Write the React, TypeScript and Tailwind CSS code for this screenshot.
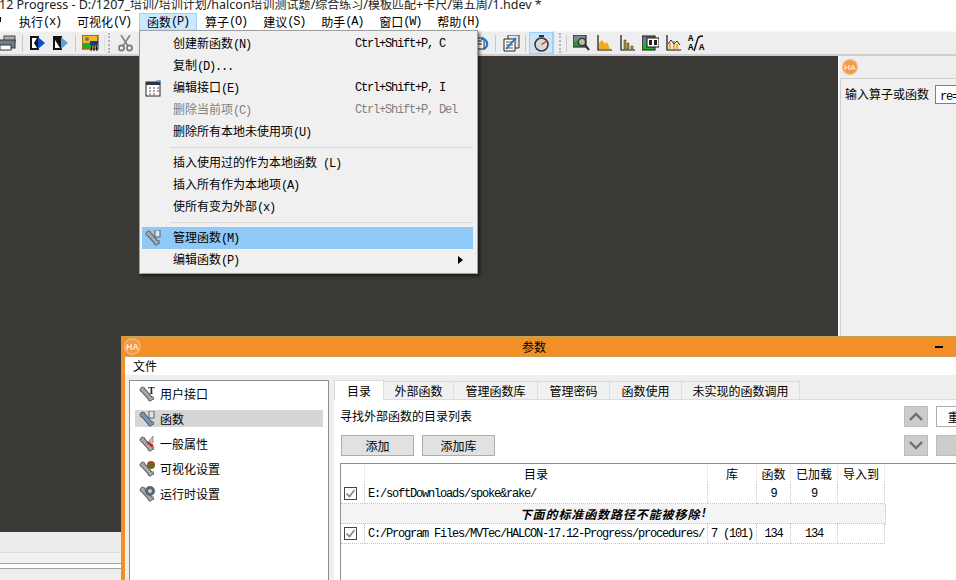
import React from 'react';

// SimSun is not available: CJK runs use Noto, ASCII runs are squeezed to SimSun's 6px cell
const Sim = ({ text }: { text: string }) => (
  <>
    {text.split(/([\x00-\x7f]+)/).filter(Boolean).map((part, i) =>
      /^[\x00-\x7f]+$/.test(part) ? (
        <span key={i} className="font-['Liberation_Mono',monospace] tracking-[-1.2px] whitespace-pre">{part}</span>
      ) : (
        <span key={i}>{part}</span>
      )
    )}
  </>
);

// window title: latin is a bit larger than the CJK here
const TitleText = ({ text }: { text: string }) => (
  <>
    {text.split(/([\x00-\x7f]+)/).filter(Boolean).map((part, i) =>
      /^[\x00-\x7f]+$/.test(part) ? (
        <span key={i} className="font-['Noto_Sans',sans-serif] text-[12.5px] whitespace-pre">{part}</span>
      ) : (
        <span key={i} className="text-[12px]">{part}</span>
      )
    )}
  </>
);

const Wrench = ({ color = '#a3abb1', children }: { color?: string; children?: React.ReactNode }) => (
  <svg width="16" height="16" viewBox="0 0 16 16" className="shrink-0">
    <path d="M3.5 3.5 L11.5 12.5" stroke="#50585e" strokeWidth="5" strokeLinecap="round" />
    <path d="M1 5 L3.5 3.5 L4.5 1 M10 15 L11.5 12.5 L15 12" stroke="#50585e" strokeWidth="3" fill="none" />
    <path d="M3.5 3.5 L11.5 12.5" stroke={color} strokeWidth="3.2" strokeLinecap="round" />
    <path d="M1.5 5 L3.5 3.5 L4.5 1.5 M10.5 14.5 L11.5 12.5 L14.5 12" stroke={color} strokeWidth="1.6" fill="none" />
    {children}
  </svg>
);

const HaLogo = ({ size }: { size: number }) => (
  <svg width={size} height={size} viewBox="0 0 16 16" className="shrink-0">
    <circle cx="8" cy="8" r="8" fill="#f7b478" />
    <circle cx="8" cy="8" r="6.6" fill="#f29a46" />
    <text x="8" y="11" textAnchor="middle" fontSize="8" fontWeight="700" fill="#ffe9d4" fontFamily="Liberation Sans, sans-serif">HA</text>
  </svg>
);

const Tool = ({ children }: { children: React.ReactNode }) => (
  <svg width="17" height="17" viewBox="0 0 17 17" className="shrink-0">{children}</svg>
);

const Sep = ({ className = '' }: { className?: string }) => <div className={`w-px h-[17px] bg-[#c8c8c8] shrink-0 ${className}`} />;
const Grip = () => <div className="w-[3px] h-[20px] shrink-0 border-l-2 border-dotted border-[#b4b4b4]" />;

const Printer = () => (
  <Tool>
    <rect x="4" y="1" width="11" height="6" fill="#a8b0b5" stroke="#444" />
    <rect x="-3" y="5" width="18" height="8" fill="#707e88" stroke="#333" />
    <rect x="0" y="10" width="11" height="5" fill="#fff" stroke="#333" />
  </Tool>
);
const DocArrow = ({ flip }: { flip?: boolean }) => (
  <Tool>
    <path d="M1 1 H10 V15 H1 Z" fill="#111" />
    <path d={flip ? 'M3 5 L8 13 H3 Z' : 'M3 3 H8 L5 8 L8 13 H3 Z'} fill="#fff" />
    <path d="M9 2 L16 8 L9 14 Z" fill={flip ? '#5aa0e0' : '#0b4fd0'} />
  </Tool>
);
const PictureIcon = () => (
  <Tool>
    <rect x="0" y="0" width="16" height="14" fill="#f4b818" stroke="#333" />
    <rect x="1" y="8" width="9" height="5" fill="#19b51f" />
    <circle cx="5" cy="4" r="2" fill="#6b7078" />
    <rect x="8" y="6" width="8" height="4" fill="#123a9a" />
    <path d="M10 10 L9 16 M14 10 L15 16 M12 10 V16" stroke="#111" strokeWidth="1.2" />
  </Tool>
);
const Scissors = () => (
  <Tool>
    <path d="M4 0 L11 11 M13 0 L6 11" stroke="#8a8a8a" strokeWidth="1.8" />
    <circle cx="4.5" cy="13" r="2.6" fill="none" stroke="#777" strokeWidth="1.6" />
    <circle cx="12.5" cy="13" r="2.6" fill="none" stroke="#777" strokeWidth="1.6" />
  </Tool>
);
const UndoDoc = () => (
  <Tool>
    <path d="M-2 3 H8 V14 H-2 Z" fill="#fff" stroke="#222" />
    <path d="M0 6 H6 M0 9 H6" stroke="#222" />
    <path d="M5 4 A5 5 0 1 1 7 14" fill="none" stroke="#1679d6" strokeWidth="2.4" />
  </Tool>
);
const EditDoc = () => (
  <Tool>
    <path d="M5 0 H16 V13 H5 Z" fill="#e4e4e4" stroke="#333" />
    <path d="M1 4 H12 V16 H1 Z" fill="#fff" stroke="#222" />
    <path d="M3 7 H10 M3 10 H10 M3 13 H10" stroke="#555" />
    <path d="M3 14 L13 3" stroke="#1c6fd0" strokeWidth="1.8" />
  </Tool>
);
const Timer = () => (
  <Tool>
    <rect x="6" y="0" width="5" height="2" fill="#333" />
    <circle cx="8.5" cy="9.5" r="6.5" fill="#d8d8d8" stroke="#333" strokeWidth="1.5" />
    <path d="M8.5 9.5 L14 6" stroke="#e03020" strokeWidth="1.3" />
  </Tool>
);
const ZoomImage = () => (
  <Tool>
    <rect x="0" y="0" width="13" height="12" fill="#7b8a92" stroke="#111" />
    <path d="M1 11 V7 L5 5 L12 11 Z" fill="#16a31c" />
    <circle cx="9" cy="7" r="3.6" fill="#b8c4a0" stroke="#333" strokeWidth="1.4" />
    <path d="M12 10 L16 15" stroke="#333" strokeWidth="2.2" />
  </Tool>
);
const AreaChart = () => (
  <Tool>
    <path d="M2 0 V15 H16" fill="none" stroke="#111" strokeWidth="1.2" />
    <path d="M3 14 V8 L6 5 L9 9 L11 7 L14 14 Z" fill="#f3ad12" />
  </Tool>
);
const BarChart = () => (
  <Tool>
    <path d="M2 0 V15 H16" fill="none" stroke="#111" strokeWidth="1.2" />
    <path d="M5 14 V5 H7 V14 Z M8 14 V8 H10 V14 Z M12 14 V11 H14 V14 Z" fill="#c98d10" stroke="#333" strokeWidth="0.5" />
  </Tool>
);
const Feature = () => (
  <Tool>
    <rect x="0" y="1" width="13" height="14" fill="#6d7c84" stroke="#111" />
    <path d="M1 14 V8 L12 14 Z M1 9 H12 V14 H1 Z" fill="#16b51c" />
    <rect x="5" y="3" width="12" height="9" fill="#fff" stroke="#111" />
    <path d="M7 5 H10 V10 H7 Z M12 5 H15 V10 H12 Z" fill="#222" />
  </Tool>
);
const LineChart = () => (
  <Tool>
    <path d="M2 0 V15 H16" fill="none" stroke="#111" strokeWidth="1.2" />
    <path d="M5 14 V8 M9 14 V6 M12 14 V9" stroke="#e89b12" strokeWidth="1.6" />
    <path d="M3 9 L6 5 L9 9 L12 6 L15 10" fill="none" stroke="#333" />
  </Tool>
);
const FontChart = () => (
  <div className="w-[17px] h-[17px] shrink-0 relative font-['Liberation_Mono',monospace] text-[9px] leading-[8px] font-bold text-black">
    <span className="absolute left-0 top-0">A</span>
    <span className="absolute left-0 top-[9px]">A</span>
    <span className="absolute left-[11px] top-[9px]">A</span>
    <svg width="17" height="17" viewBox="0 0 17 17" className="absolute inset-0">
      <path d="M6 16 L10 3 Q11 1 15 1" fill="none" stroke="#111" strokeWidth="1.4" />
    </svg>
  </div>
);

const menuBar = [
  { label: '执行(x)' },
  { label: '可视化(V)' },
  { label: '函数(P)', active: true },
  { label: '算子(O)' },
  { label: '建议(S)' },
  { label: '助手(A)' },
  { label: '窗口(W)' },
  { label: '帮助(H)' },
];

const MenuItem = ({ label, shortcut, disabled, active, icon, arrow }: { label: string; shortcut?: string; disabled?: boolean; active?: boolean; icon?: React.ReactNode; arrow?: boolean }) => (
  <div className={`h-[22px] ml-[2px] mr-[4px] flex items-center relative ${active ? 'bg-[#90c8f6]' : ''} ${disabled ? 'text-[#808080]' : 'text-black'}`}>
    <div className="w-[31px] pl-[3px] flex items-center shrink-0">{icon}</div>
    <div className="w-[182px] shrink-0"><Sim text={label} /></div>
    {shortcut && <Sim text={shortcut} />}
    {arrow && <div className="absolute right-[10px] w-0 h-0 border-y-[4px] border-y-transparent border-l-[5px] border-l-black" />}
  </div>
);

const MenuSep = () => <div className="h-px bg-[#d7d7d7] ml-[30px] mr-[4px] my-[4px]" />;

const tree = [
  { label: '用户接口', icon: <text x="9" y="8" fontSize="10" fontWeight="700" fontFamily="Liberation Serif, serif" fill="#222">T</text> },
  { label: '函数', icon: <rect x="10" y="0" width="5" height="7" fill="#dfe6ea" stroke="#56636c" />, color: '#6b9cc4', selected: true },
  { label: '一般属性', icon: <><path d="M10 5 L14 0 V7 Z" fill="#c4c8cc" stroke="#666" strokeWidth="0.6" /><path d="M8 6 L14 10" stroke="#e01818" strokeWidth="2.2" /></> },
  { label: '可视化设置', icon: <><circle cx="12" cy="4" r="4" fill="#a64a1c" /><circle cx="13" cy="5" r="2" fill="#1f8a2c" /></> },
  { label: '运行时设置', icon: <><circle cx="11" cy="5" r="5" fill="#5a6670" /><circle cx="11" cy="5" r="2" fill="#c8d0d6" /></> },
];

const tabs = [
  { label: '目录', width: 'w-[50px]', active: true },
  { label: '外部函数', width: 'w-[70px]' },
  { label: '管理函数库', width: 'w-[84px]' },
  { label: '管理密码', width: 'w-[72px]' },
  { label: '函数使用', width: 'w-[72px]' },
  { label: '未实现的函数调用', width: 'w-[118px]' },
];

const Check = () => (
  <div className="w-[13px] h-[13px] border border-[#444] bg-white flex items-center justify-center">
    <svg width="11" height="11" viewBox="0 0 11 11"><path d="M1.5 5.5 L4.5 8.5 L9.5 2" fill="none" stroke="#808080" strokeWidth="1.5" /></svg>
  </div>
);

const cols = ['w-[24px]', 'w-[343px]', 'w-[49px]', 'w-[34px]', 'w-[47px]', 'w-[47px]'];
const dotted = 'border-r border-b border-dotted border-[#c4c4c4]';

const Row = ({ dir, lib, fn, loaded }: { dir: string; lib?: string; fn: string; loaded: string }) => (
  <div className="flex h-[20px] items-center">
    <div className={`${cols[0]} h-full flex items-center pl-[3px] ${dotted}`}><Check /></div>
    <div className={`${cols[1]} h-full flex items-center pl-[3px] ${dotted} overflow-hidden`}><Sim text={dir} /></div>
    <div className={`${cols[2]} h-full flex items-center justify-center ${dotted}`}>{lib && <Sim text={lib} />}</div>
    <div className={`${cols[3]} h-full flex items-center justify-center ${dotted}`}><Sim text={fn} /></div>
    <div className={`${cols[4]} h-full flex items-center justify-center ${dotted}`}><Sim text={loaded} /></div>
    <div className={`${cols[5]} h-full ${dotted}`} />
  </div>
);

export default function App() {
  return (
    <div className="relative w-[956px] h-[580px] overflow-hidden bg-white text-black text-[12px] leading-[16px] font-['Noto_Sans_CJK_SC',sans-serif]">
      <div className="h-[31px] bg-white overflow-hidden">
        <div className="h-[10px] whitespace-nowrap leading-[8px] text-[#222] -ml-[1px]">
          <TitleText text="12 Progress - D:/1207_培训/培训计划/halcon培训测试题/综合练习/模板匹配+卡尺/第五周/1.hdev *" />
        </div>
        <div className="flex h-[21px] items-start pl-[11px] relative">
          <div className="absolute left-0 top-[7px] w-px h-[5px] bg-black" />
          {menuBar.map((m) => (
            <div
              key={m.label}
              className={`h-[18px] mt-[3px] px-[7px] flex items-center border-x ${m.active ? 'bg-[#cce8ff] border-[#99d1ff] border-y' : 'border-transparent'}`}
            >
              <Sim text={m.label} />
            </div>
          ))}
        </div>
      </div>

      <div className="h-[25px] bg-[#eeeeee] border-t border-[#f7f7f7] border-b-2 border-b-[#cfcfcf] flex items-center">
        <Printer />
        <Sep className="ml-[5px] mr-[6px]" />
        <DocArrow />
        <div className="w-[6px]" />
        <DocArrow flip />
        <Sep className="ml-[6px] mr-[6px]" />
        <PictureIcon />
        <Sep className="ml-[5px] mr-[3px] bg-[#dcdcdc]" />
        <Grip />
        <div className="w-[6px]" />
        <Scissors />
        <div className="w-[342px] shrink-0" />
        <UndoDoc />
        <Sep className="ml-[2px] mr-[7px]" />
        <EditDoc />
        <Sep className="ml-[5px] mr-[3px]" />
        <div className="w-[24px] h-[22px] bg-[#cde4f7] border border-[#99d1ff] flex items-center justify-center shrink-0"><Timer /></div>
        <div className="w-px h-[24px] bg-[#c4c4c4] shrink-0" />
        <div className="w-[5px]" />
        <Grip />
        <div className="w-[4px]" />
        <Sep className="mr-[6px]" />
        <div className="flex gap-[6px]">
          <ZoomImage />
          <AreaChart />
          <BarChart />
          <Feature />
          <LineChart />
          <FontChart />
        </div>
      </div>

      <div className="flex h-[524px]">
        <div className="w-[838px] shrink-0 flex flex-col">
          <div className="flex-1 bg-[#3a3935]" />
          <div className="h-[48px] bg-[#ececec] flex flex-col">
            <div className="h-[21px] border-b border-[#dcdcdc]" />
            <div className="h-[11px] bg-[#f0f0f0] border-b border-[#a4a4a4]" />
            <div className="h-[5px] bg-white border-b border-[#a4a4a4]" />
            <div className="flex-1 bg-[#eeeeee]" />
          </div>
        </div>
        <div className="flex-1 bg-[#eeeeee] border-l-2 border-[#f8f8f8] flex flex-col">
          <div className="h-[22px] pl-[2px] flex items-center"><HaLogo size={16} /></div>
          <div className="flex-1 bg-[#f0f0f0] border-l border-t border-[#cfcfcf] rounded-tl-[2px] flex items-start gap-[6px] pl-[4px] pt-[6px]">
            <span className="whitespace-nowrap leading-[18px]">输入算子或函数</span>
            <div className="h-[19px] flex-1 bg-white border border-[#808080] pl-[4px] leading-[17px] overflow-hidden"><Sim text="re=" /></div>
          </div>
        </div>
      </div>

      {/* function menu */}
      <div className="absolute left-[139px] top-[30px] w-[339px] h-[244px] bg-[#f0f0f0] border border-[#a0a0a0] shadow-[2px_2px_3px_rgba(0,0,0,0.55)] pt-[2px]">
        <MenuItem label="创建新函数(N)" shortcut="Ctrl+Shift+P, C" />
        <MenuItem label="复制(D)..." />
        <MenuItem
          label="编辑接口(E)"
          shortcut="Ctrl+Shift+P, I"
          icon={
            <Tool>
              <rect x="1" y="2" width="14" height="14" fill="#fff" stroke="#222" />
              <rect x="1" y="2" width="14" height="3" fill="#334" />
              <path d="M4 8 H6 M8 8 H10 M12 8 H14 M4 11 H6 M8 11 H10 M12 11 H14 M4 14 H6 M8 14 H10" stroke="#555" />
              <path d="M11 0 H15 V3" fill="none" stroke="#2a7ad6" />
            </Tool>
          }
        />
        <MenuItem label="删除当前项(C)" shortcut="Ctrl+Shift+P, Del" disabled />
        <MenuItem label="删除所有本地未使用项(U)" />
        <MenuSep />
        <MenuItem label="插入使用过的作为本地函数 (L)" />
        <MenuItem label="插入所有作为本地项(A)" />
        <MenuItem label="使所有变为外部(x)" />
        <MenuSep />
        <MenuItem
          label="管理函数(M)"
          active
          icon={<Wrench><rect x="10" y="0" width="5" height="7" fill="#dfe6ea" stroke="#56636c" /></Wrench>}
        />
        <MenuItem label="编辑函数(P)" arrow />
      </div>

      {/* parameters dialog */}
      <div className="absolute left-[121px] top-[336px] w-[835px] h-[244px] border-t border-[#c2a458] border-l-4 border-l-[#f28f26] bg-[#efefef] flex flex-col">
        <div className="h-[20px] -ml-[4px] bg-[#f28f26] border-b border-[#d0a050] flex items-center relative shrink-0">
          <div className="ml-[3px]"><HaLogo size={17} /></div>
          <div className="flex-1 text-center pr-[8px]">参数</div>
          <div className="w-[8px] h-[2px] bg-black mr-[13px]" />
        </div>
        <div className="h-[18px] bg-white pl-[8px] leading-[17px] shrink-0">文件</div>
        <div className="flex-1 flex pl-[4px] pt-[5px] gap-[5px] min-h-0">
          <div className="w-[200px] shrink-0 bg-white border border-[#8a9098] border-b-0 px-[5px] pt-[4px] flex flex-col">
            {tree.map((t) => (
              <div key={t.label} className={`h-[17px] mb-[8px] flex items-center gap-[5px] pl-[4px] ${t.selected ? 'bg-[#d6d6d6]' : ''}`}>
                <Wrench color={t.color}>{t.icon}</Wrench>
                <span>{t.label}</span>
              </div>
            ))}
          </div>
          <div className="flex-1 flex flex-col min-w-0">
            <div className="flex h-[20px] shrink-0 border-b border-[#dcdcdc] items-end">
              {tabs.map((t) => (
                <div
                  key={t.label}
                  className={`${t.width} shrink-0 flex items-center justify-center border-r border-[#dcdcdc] ${t.active ? 'h-[20px] bg-white border-l border-t -mb-px' : 'h-[18px] border-t bg-[#f0f0f0]'}`}
                >
                  {t.label}
                </div>
              ))}
            </div>
            <div className="flex-1 bg-white pl-[6px] pt-[8px] min-h-0">
              <div className="flex justify-between h-[17px]">
                <span>寻找外部函数的目录列表</span>
              </div>
              <div className="flex mt-[10px] ml-[1px] gap-[8px] h-[21px]">
                <div className="w-[73px] bg-[#e1e1e1] border border-[#adadad] flex items-center justify-center">添加</div>
                <div className="w-[73px] bg-[#e1e1e1] border border-[#adadad] flex items-center justify-center">添加库</div>
              </div>
              <div className="mt-[7px] border-t border-l border-[#8e8e96] w-[616px] h-[200px]">
                <div className="flex h-[20px] w-[545px] text-center leading-[20px]">
                  {['', '目录', '库', '函数', '已加载', '导入到'].map((h, i) => (
                    <div key={i} className={`${cols[i]} h-full border-r border-[#ececec]`}>{h}</div>
                  ))}
                </div>
                <div className="w-[545px]">
                  <Row dir="E:/softDownloads/spoke&rake/" fn="9" loaded="9" />
                  <div className={`h-[20px] bg-[#f5f5f5] flex items-center justify-center font-bold italic tracking-[0.9px] ${dotted}`}>
                    <Sim text="下面的标准函数路径不能被移除!" />
                  </div>
                  <Row dir="C:/Program Files/MVTec/HALCON-17.12-Progress/procedures/" lib="7 (101)" fn="134" loaded="134" />
                </div>
              </div>
            </div>
          </div>
        </div>
        {/* move up / move down column, sits over the pane */}
        <div className="absolute left-[779px] top-[69px] w-[60px] flex flex-col gap-[8px]">
          <div className="flex gap-[8px]">
            <div className="w-[26px] h-[21px] bg-[#cccccc] border border-[#bdbdbd] flex items-center justify-center">
              <svg width="14" height="9" viewBox="0 0 14 9"><path d="M1 8 L7 2 L13 8" fill="none" stroke="#6f6f6f" strokeWidth="2.4" /></svg>
            </div>
            <div className="w-[30px] h-[21px] bg-white border border-[#adadad] pl-[11px] leading-[19px] overflow-hidden">重</div>
          </div>
          <div className="flex gap-[8px]">
            <div className="w-[26px] h-[21px] bg-[#cccccc] border border-[#bdbdbd] flex items-center justify-center">
              <svg width="14" height="9" viewBox="0 0 14 9"><path d="M1 1 L7 7 L13 1" fill="none" stroke="#6f6f6f" strokeWidth="2.4" /></svg>
            </div>
            <div className="w-[30px] h-[21px] bg-[#cccccc] border border-[#bdbdbd]" />
          </div>
        </div>
      </div>
    </div>
  );
}
